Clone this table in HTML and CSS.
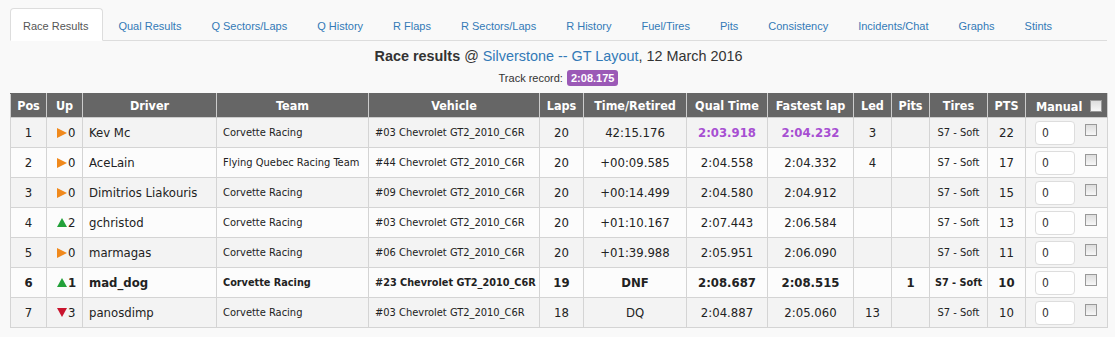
FILE: index.html
```html
<!DOCTYPE html>
<html>
<head>
<meta charset="utf-8">
<link rel="stylesheet" href="styles.css">
</head>
<body>
<div class="page">
  <ul class="tabs">
    <li class="tab active"><a>Race Results</a></li>
    <li class="tab"><a>Qual Results</a></li>
    <li class="tab"><a>Q Sectors/Laps</a></li>
    <li class="tab"><a>Q History</a></li>
    <li class="tab"><a>R Flaps</a></li>
    <li class="tab"><a>R Sectors/Laps</a></li>
    <li class="tab"><a>R History</a></li>
    <li class="tab"><a>Fuel/Tires</a></li>
    <li class="tab"><a>Pits</a></li>
    <li class="tab"><a>Consistency</a></li>
    <li class="tab"><a>Incidents/Chat</a></li>
    <li class="tab"><a>Graphs</a></li>
    <li class="tab"><a>Stints</a></li>
  </ul>
  <h2 class="title"><b>Race results</b> @ <a class="link">Silverstone -- GT Layout</a>, 12 March 2016</h2>
  <div class="record">Track record: <span class="badge">2:08.175</span></div>
  <table class="results">
    <colgroup>
      <col style="width:36px"><col style="width:36px"><col style="width:134px"><col style="width:152px"><col style="width:171px"><col style="width:44px"><col style="width:103px"><col style="width:81px"><col style="width:86px"><col style="width:38px"><col style="width:38px"><col style="width:58px"><col style="width:38px"><col style="width:82px">
    </colgroup>
    <thead>
      <tr>
        <th>Pos</th><th>Up</th><th>Driver</th><th>Team</th><th>Vehicle</th><th>Laps</th><th>Time/Retired</th><th>Qual Time</th><th>Fastest lap</th><th>Led</th><th>Pits</th><th>Tires</th><th>PTS</th><th class="manual-h">Manual <span class="cb"></span></th>
      </tr>
    </thead>
    <tbody>
      <tr>
        <td>1</td><td class="up"><span class="ar same"></span>0</td><td class="drv">Kev Mc</td><td class="sm">Corvette Racing</td><td class="sm">#03 Chevrolet GT2_2010_C6R</td><td>20</td><td>42:15.176</td><td class="best">2:03.918</td><td class="best">2:04.232</td><td>3</td><td></td><td class="sm">S7 - Soft</td><td>22</td><td class="man"><div class="mwrap"><span class="inp">0</span><span class="cb"></span></div></td>
      </tr>
      <tr>
        <td>2</td><td class="up"><span class="ar same"></span>0</td><td class="drv">AceLain</td><td class="sm">Flying Quebec Racing Team</td><td class="sm">#44 Chevrolet GT2_2010_C6R</td><td>20</td><td>+00:09.585</td><td>2:04.558</td><td>2:04.332</td><td>4</td><td></td><td class="sm">S7 - Soft</td><td>17</td><td class="man"><div class="mwrap"><span class="inp">0</span><span class="cb"></span></div></td>
      </tr>
      <tr>
        <td>3</td><td class="up"><span class="ar same"></span>0</td><td class="drv">Dimitrios Liakouris</td><td class="sm">Corvette Racing</td><td class="sm">#09 Chevrolet GT2_2010_C6R</td><td>20</td><td>+00:14.499</td><td>2:04.580</td><td>2:04.912</td><td></td><td></td><td class="sm">S7 - Soft</td><td>15</td><td class="man"><div class="mwrap"><span class="inp">0</span><span class="cb"></span></div></td>
      </tr>
      <tr>
        <td>4</td><td class="up"><span class="ar gain"></span>2</td><td class="drv">gchristod</td><td class="sm">Corvette Racing</td><td class="sm">#03 Chevrolet GT2_2010_C6R</td><td>20</td><td>+01:10.167</td><td>2:07.443</td><td>2:06.584</td><td></td><td></td><td class="sm">S7 - Soft</td><td>13</td><td class="man"><div class="mwrap"><span class="inp">0</span><span class="cb"></span></div></td>
      </tr>
      <tr>
        <td>5</td><td class="up"><span class="ar same"></span>0</td><td class="drv">marmagas</td><td class="sm">Corvette Racing</td><td class="sm">#06 Chevrolet GT2_2010_C6R</td><td>20</td><td>+01:39.988</td><td>2:05.951</td><td>2:06.090</td><td></td><td></td><td class="sm">S7 - Soft</td><td>11</td><td class="man"><div class="mwrap"><span class="inp">0</span><span class="cb"></span></div></td>
      </tr>
      <tr class="me">
        <td>6</td><td class="up"><span class="ar gain"></span>1</td><td class="drv">mad_dog</td><td class="sm">Corvette Racing</td><td class="sm">#23 Chevrolet GT2_2010_C6R</td><td>19</td><td>DNF</td><td>2:08.687</td><td>2:08.515</td><td></td><td>1</td><td class="sm">S7 - Soft</td><td>10</td><td class="man"><div class="mwrap"><span class="inp">0</span><span class="cb"></span></div></td>
      </tr>
      <tr>
        <td>7</td><td class="up"><span class="ar loss"></span>3</td><td class="drv">panosdimp</td><td class="sm">Corvette Racing</td><td class="sm">#03 Chevrolet GT2_2010_C6R</td><td>18</td><td>DQ</td><td>2:04.887</td><td>2:05.060</td><td>13</td><td></td><td class="sm">S7 - Soft</td><td>10</td><td class="man"><div class="mwrap"><span class="inp">0</span><span class="cb"></span></div></td>
      </tr>
    </tbody>
  </table>
</div>
</body>
</html>
```

FILE: styles.css
```css
html, body {
  margin: 0;
  padding: 0;
  background: #f9f9f9;
}
body {
  font-family: "Liberation Sans", Arial, sans-serif;
  color: #333;
}
.page {
  padding: 8px 8px 0 10px;
}
.tabs {
  list-style: none;
  margin: 0;
  padding: 0;
  display: flex;
  border-bottom: 1px solid #ddd;
  height: 32px;
}
.tab {
  margin-right: 2px;
  margin-bottom: -1px;
}
.tab a {
  display: block;
  height: 31px;
  box-sizing: border-box;
  padding: 10px 14px 0 12px;
  font-size: 11px;
  line-height: 14px;
  color: #337ab7;
  border: 1px solid transparent;
  border-radius: 4px 4px 0 0;
}
.tab.active a {
  color: #555;
  background: #fff;
  border-color: #ddd;
  border-bottom-color: #fff;
  height: 33px;
}
.title {
  margin: 0;
  padding-top: 6px;
  text-align: center;
  font-size: 14.4px;
  font-weight: normal;
  line-height: 18px;
  color: #333;
}
.title b {
  font-weight: bold;
}
.link {
  color: #337ab7;
}
.record {
  text-align: center;
  font-size: 11px;
  line-height: 16px;
  margin-top: 5px;
  color: #333;
}
.badge {
  display: inline-block;
  background: #9b59b6;
  color: #fff;
  font-weight: bold;
  font-size: 11px;
  line-height: 16px;
  padding: 0 4px;
  border-radius: 3px;
  margin-left: 1px;
}
.results {
  margin-top: 7px;
  border-collapse: collapse;
  table-layout: fixed;
  width: 1098px;
  font-family: "DejaVu Sans Condensed", "DejaVu Sans", sans-serif;
  border: 1px solid #ccc;
}
.results th {
  background: #666;
  color: #fff;
  font-size: 12.5px;
  font-weight: bold;
  height: 23px;
  padding: 0;
  border: 1px solid #ccc;
  border-top-color: #666;
  text-align: center;
  white-space: nowrap;
}
.results td {
  height: 29px;
  padding: 0;
  border: 1px solid #d4d4d4;
  text-align: center;
  font-size: 13px;
  color: #222;
  white-space: nowrap;
  overflow: hidden;
}
.results tbody tr:nth-child(odd) td {
  background: #f3f3f3;
}
.results tbody tr:nth-child(even) td {
  background: #fcfcfc;
}
.results td.drv {
  text-align: left;
  padding-left: 6px;
  font-size: 13px;
}
.results td.sm {
  text-align: left;
  padding-left: 6px;
  font-size: 11px;
}
.results td:nth-child(12) {
  text-align: center;
  padding-left: 0;
}
.results td.up {
  text-align: left;
  padding-left: 10px;
}
.ar {
  display: inline-block;
  width: 0;
  height: 0;
  margin-right: 1px;
}
.ar.same {
  border-left: 10px solid #f0891c;
  border-top: 5px solid transparent;
  border-bottom: 5px solid transparent;
  vertical-align: -0.5px;
}
.ar.gain {
  border-bottom: 9px solid #23a13a;
  border-left: 5px solid transparent;
  border-right: 5px solid transparent;
  vertical-align: 0;
}
.ar.loss {
  border-top: 9px solid #c9142d;
  border-left: 5px solid transparent;
  border-right: 5px solid transparent;
  vertical-align: 0;
}
.results td.best {
  color: #a74fd2;
  font-weight: bold;
}
.results tr.me td {
  font-weight: bold;
}
.results tr.me td.sm {
  font-size: 10.8px;
}
.manual-h {
  text-align: left !important;
  padding-left: 10px !important;
}
.manual-h .cb {
  vertical-align: -1px;
  margin-left: 4px;
}
.mwrap {
  display: flex;
  align-items: flex-start;
  gap: 10px;
  padding-left: 9px;
}
.inp {
  display: block;
  width: 40px;
  height: 24px;
  box-sizing: border-box;
  background: #fff;
  border: 1px solid #ddd;
  border-radius: 4px;
  font-size: 12px;
  font-weight: normal;
  line-height: 22px;
  padding-left: 6px;
  text-align: left;
  color: #333;
}
.cb {
  display: inline-block;
  width: 12px;
  height: 12px;
  box-sizing: border-box;
  border: 1px solid #999;
  background: linear-gradient(#ddd, #f7f7f7);
  margin-top: 3px;
}
```
